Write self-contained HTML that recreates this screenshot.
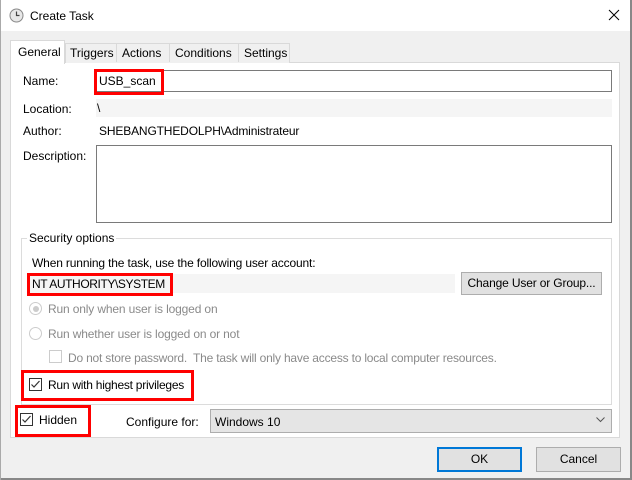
<!DOCTYPE html>
<html><head><style>
*{margin:0;padding:0;box-sizing:border-box}
body{width:632px;height:480px;background:#f0f0f0;font-family:"Liberation Sans",sans-serif;font-size:12px;color:#000;position:relative;overflow:hidden}
.a{position:absolute}
.t{position:absolute;white-space:nowrap;line-height:14px}
.n{letter-spacing:-0.15px}
.red{position:absolute;border:3px solid #f00}
.cb{position:absolute;width:13px;height:13px;border:1px solid #333;background:#fff}
.btn{position:absolute;background:#e1e1e1;border:1px solid #adadad;text-align:center;line-height:20px}
</style></head><body>
<div class="a" style="left:0;top:0;width:632px;height:31px;background:#fff"></div>
<svg class="a" style="left:9px;top:8px" width="15" height="15"><circle cx="7.5" cy="7.5" r="6.5" fill="#e8e8e8" stroke="#888"/><path d="M7.5 3.5V7.5H10.5" stroke="#444" fill="none" stroke-width="1.2"/></svg>
<div class="t" style="left:30px;top:9px">Create Task</div>
<svg class="a" style="left:608px;top:9px" width="12" height="12"><path d="M1 1L11 11M11 1L1 11" stroke="#000" stroke-width="1"/></svg>
<div class="a" style="left:630px;top:0;width:2px;height:480px;background:#888"></div>
<div class="a" style="left:0;top:478px;width:632px;height:2px;background:#888"></div>
<div class="a" style="left:0;top:0;width:1px;height:480px;background:#aaa"></div>

<div class="a" style="left:10px;top:62px;width:610px;height:376px;background:#fff;border:1px solid #d9d9d9"></div>
<div class="a" style="left:65px;top:43px;width:225px;height:20px;background:#f0f0f0;border:1px solid #d9d9d9;border-bottom:none"></div>
<div class="a" style="left:116px;top:43px;width:1px;height:19px;background:#d9d9d9"></div>
<div class="a" style="left:169px;top:43px;width:1px;height:19px;background:#d9d9d9"></div>
<div class="a" style="left:238px;top:43px;width:1px;height:19px;background:#d9d9d9"></div>
<div class="a" style="left:10px;top:40px;width:55px;height:24px;background:#fff;border:1px solid #d9d9d9;border-bottom:none"></div>
<div class="t" style="left:18px;top:45px">General</div>
<div class="t" style="left:70px;top:46px">Triggers</div>
<div class="t" style="left:122px;top:46px">Actions</div>
<div class="t" style="left:175px;top:46px">Conditions</div>
<div class="t" style="left:244px;top:46px">Settings</div>

<div class="t" style="left:23px;top:74px">Name:</div>
<div class="a" style="left:95px;top:70px;width:517px;height:22px;border:1px solid #7a7a7a;background:#fff"></div>
<div class="t" style="left:99px;top:74px">USB_scan</div>
<div class="red" style="left:94px;top:69px;width:70px;height:26px"></div>
<div class="t" style="left:23px;top:102px">Location:</div>
<div class="a" style="left:96px;top:99px;width:516px;height:18px;background:#f5f5f5"></div>
<div class="t" style="left:97px;top:101px">\</div>
<div class="t" style="left:23px;top:124px">Author:</div>
<div class="t n" style="left:99px;top:124px">SHEBANGTHEDOLPH\Administrateur</div>
<div class="t" style="left:23px;top:149px">Description:</div>
<div class="a" style="left:96px;top:145px;width:516px;height:78px;border:1px solid #7a7a7a;background:#fff"></div>

<div class="a" style="left:21px;top:238px;width:591px;height:167px;border:1px solid #dcdcdc"></div>
<div class="t" style="left:27px;top:231px;background:#fff;padding:0 2px">Security options</div>
<div class="t n" style="left:32px;top:256px">When running the task, use the following user account:</div>
<div class="a" style="left:28px;top:274px;width:427px;height:19px;background:#f5f5f5"></div>
<div class="t" style="left:32px;top:277px;letter-spacing:-0.4px">NT AUTHORITY\SYSTEM</div>
<div class="red" style="left:27px;top:273px;width:146px;height:23px"></div>
<div class="btn n" style="left:461px;top:272px;width:141px;height:23px">Change User or Group...</div>
<div class="a" style="left:29px;top:302px;width:13px;height:13px;border-radius:50%;border:1px solid #ccc;background:#fff"></div>
<div class="a" style="left:32.5px;top:305.5px;width:6px;height:6px;border-radius:50%;background:#ccc"></div>
<div class="t n" style="left:48px;top:302px;color:#8a8a8a">Run only when user is logged on</div>
<div class="a" style="left:29px;top:327px;width:13px;height:13px;border-radius:50%;border:1px solid #ccc;background:#fff"></div>
<div class="t n" style="left:48px;top:327px;color:#8a8a8a">Run whether user is logged on or not</div>
<div class="cb" style="left:49px;top:350px;border-color:#ccc"></div>
<div class="t" style="left:68px;top:351px;color:#8a8a8a;letter-spacing:-0.2px">Do not store password.&nbsp; The task will only have access to local computer resources.</div>
<div class="red" style="left:21px;top:370px;width:173px;height:31px"></div>
<div class="cb" style="left:29px;top:378px"></div>
<svg class="a" style="left:29px;top:378px" width="13" height="13"><path d="M2.5 6.5L5 9L10.5 3" stroke="#333" fill="none" stroke-width="1.2"/></svg>
<div class="t" style="left:48px;top:378px;letter-spacing:-0.25px">Run with highest privileges</div>
<div class="red" style="left:15px;top:405px;width:76px;height:32px"></div>
<div class="cb" style="left:20px;top:413px"></div>
<svg class="a" style="left:20px;top:413px" width="13" height="13"><path d="M2.5 6.5L5 9L10.5 3" stroke="#333" fill="none" stroke-width="1.2"/></svg>
<div class="t" style="left:39px;top:413px">Hidden</div>
<div class="t" style="left:126px;top:415px">Configure for:</div>
<div class="a" style="left:210px;top:409px;width:402px;height:24px;background:#e5e5e5;border:1px solid #adadad"></div>
<div class="t" style="left:215px;top:415px">Windows 10</div>
<svg class="a" style="left:596px;top:417px" width="9" height="6"><path d="M0.5 0.5L4.5 4.5L8.5 0.5" stroke="#555" fill="none"/></svg>

<div class="btn" style="left:437px;top:447px;width:85px;height:25px;border:2px solid #0078d7;line-height:21px">OK</div>
<div class="btn" style="left:536px;top:447px;width:85px;height:25px;line-height:23px">Cancel</div>
</body></html>
